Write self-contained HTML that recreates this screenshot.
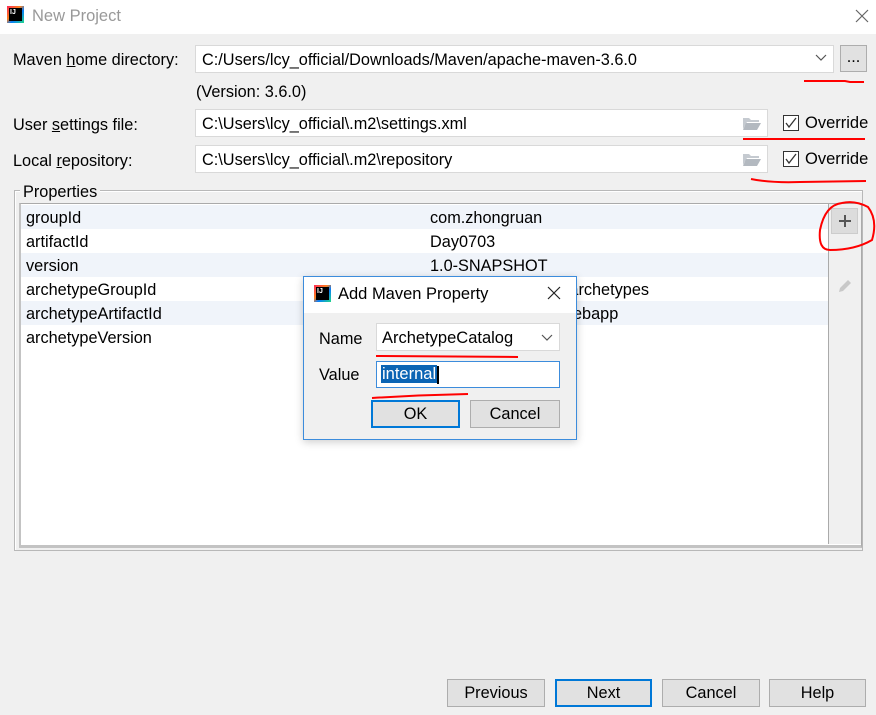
<!DOCTYPE html>
<html><head><meta charset="utf-8"><style>
*{box-sizing:border-box;margin:0;padding:0}
body{width:876px;height:715px;background:#f0f0f0;font-family:"Liberation Sans","Noto Sans CJK SC",sans-serif;font-size:16.3px;color:#000;position:relative;overflow:hidden}
.a{position:absolute}
.field{position:absolute;background:#fff;border:1px solid #d9d9d9;padding-left:6px;line-height:28px;white-space:nowrap;overflow:hidden}
.btn{position:absolute;background:#e1e1e1;border:1px solid #adadad;text-align:center;line-height:27px}
.row{position:absolute;left:21px;width:807px;height:24px;line-height:26px}
.row span{position:absolute;left:5px}
.row b{font-weight:normal;position:absolute;left:409px}
.cb{position:absolute;width:16px;height:16px;border:1px solid #333;background:#fff}
.logo{position:absolute;width:17px;height:17px;background:linear-gradient(135deg,#fe2857,#fc801d 40%,#087cfa 60%,#21d789);}
.logo i{position:absolute;left:2px;top:2px;width:13px;height:13px;background:#000;color:#fff;font-size:7px;font-style:normal;line-height:9px;padding-left:1px;font-weight:bold}
</style></head><body>
<div class="a" style="left:0;top:0;width:876px;height:34px;background:#fff"></div>
<div class="logo" style="left:7px;top:6px"><i>IJ</i></div>
<div class="a" style="left:32px;top:7px;color:#999;font-size:16.5px">New Project</div>
<svg class="a" style="left:854px;top:8px" width="16" height="16"><path d="M2 2L14 14M14 2L2 14" stroke="#666" stroke-width="1.2"/></svg>

<div class="a" style="left:13px;top:51px">Maven <u>h</u>ome directory:</div>
<div class="field" style="left:195px;top:45px;width:639px;height:28px">C:/Users/lcy_official/Downloads/Maven/apache-maven-3.6.0</div>
<svg class="a" style="left:815px;top:53px" width="12" height="10"><path d="M1 2L6 7L11 2" stroke="#555" fill="none" stroke-width="1.2"/></svg>
<div class="btn" style="left:840px;top:45px;width:27px;height:27px;line-height:22px">...</div>
<div class="a" style="left:196px;top:83px">(Version: 3.6.0)</div>

<div class="a" style="left:13px;top:116px">User <u>s</u>ettings file:</div>
<div class="field" style="left:195px;top:109px;width:573px;height:28px">C:\Users\lcy_official\.m2\settings.xml</div>
<div class="a" style="left:13px;top:152px">Local <u>r</u>epository:</div>
<div class="field" style="left:195px;top:145px;width:573px;height:28px">C:\Users\lcy_official\.m2\repository</div>
<svg class="a" style="left:742px;top:116px" width="20" height="14"><path d="M1 2h6l2 2h8v2H5L1 13z" fill="#c5cad0"/><path d="M4 7h15l-4 7H1z" fill="#b3b9c0"/></svg>
<svg class="a" style="left:742px;top:152px" width="20" height="14"><path d="M1 2h6l2 2h8v2H5L1 13z" fill="#c5cad0"/><path d="M4 7h15l-4 7H1z" fill="#b3b9c0"/></svg>
<div class="cb" style="left:783px;top:115px"></div>
<svg class="a" style="left:784px;top:116px" width="14" height="14"><path d="M2 7l3 4l7-9" stroke="#333" fill="none" stroke-width="1.3"/></svg>
<div class="a" style="left:805px;top:114px;font-size:16.5px">Override</div>
<div class="cb" style="left:783px;top:151px"></div>
<svg class="a" style="left:784px;top:152px" width="14" height="14"><path d="M2 7l3 4l7-9" stroke="#333" fill="none" stroke-width="1.3"/></svg>
<div class="a" style="left:805px;top:150px;font-size:16.5px">Override</div>

<div class="a" style="left:14px;top:190px;width:849px;height:361px;border:1px solid #b8b8b8;box-shadow:inset 1px 1px #fff"></div>
<div class="a" style="left:20px;top:183px;background:#f0f0f0;padding:0 3px">Properties</div>
<div class="a" style="left:19px;top:203px;width:843px;height:345px;border:1px solid #aaa;border-bottom:3px solid #c3c3c3;border-left:2px solid #c3c3c3;background:#fff"></div>
<div class="a" style="left:828px;top:204px;width:33px;height:340px;background:#f0f0f0;border-left:1px solid #aaa"></div>
<div class="a" style="left:831px;top:208px;width:27px;height:26px;background:#dcdcdc;border:1px solid #ccc"></div>
<svg class="a" style="left:837px;top:213px" width="16" height="16"><path d="M8 2v12M2 8h12" stroke="#555" stroke-width="2"/></svg>
<svg class="a" style="left:836px;top:277px" width="18" height="18"><path d="M3 15l1-4l8-8l3 3l-8 8z" fill="#c8c8c8"/></svg>

<div class="row" style="top:205px;background:#f0f4fa"><span>groupId</span><b>com.zhongruan</b></div>
<div class="row" style="top:229px"><span>artifactId</span><b>Day0703</b></div>
<div class="row" style="top:253px;background:#f0f4fa"><span>version</span><b>1.0-SNAPSHOT</b></div>
<div class="row" style="top:277px"><span>archetypeGroupId</span><b>org.apache.maven.archetypes</b></div>
<div class="row" style="top:301px;background:#f0f4fa"><span>archetypeArtifactId</span><b>maven-archetype-webapp</b></div>
<div class="row" style="top:325px"><span>archetypeVersion</span><b>1.4</b></div>

<!-- dialog -->
<div class="a" style="left:303px;top:276px;width:274px;height:164px;background:#f0f0f0;border:1px solid #3c8cdc;box-shadow:0 2px 8px rgba(0,0,0,.2)"></div>
<div class="a" style="left:304px;top:277px;width:272px;height:36px;background:#fff"></div>
<div class="logo" style="left:314px;top:285px"><i>IJ</i></div>
<div class="a" style="left:338px;top:285px;font-size:16.5px">Add Maven Property</div>
<svg class="a" style="left:547px;top:286px" width="14" height="14"><path d="M1 1L13 13M13 1L1 13" stroke="#222" stroke-width="1.2"/></svg>
<div class="a" style="left:319px;top:330px">Name</div>
<div class="field" style="left:376px;top:323px;width:184px;height:28px;padding-left:5px;font-size:16.5px">ArchetypeCatalog</div>
<svg class="a" style="left:541px;top:333px" width="12" height="10"><path d="M1 2L6 7L11 2" stroke="#555" fill="none" stroke-width="1.2"/></svg>
<div class="a" style="left:319px;top:366px">Value</div>
<div class="field" style="left:376px;top:361px;width:184px;height:27px;border-color:#3c8cdc;padding-left:4px;line-height:24px;font-size:16.5px"><span style="background:#0a64b4;color:#fff;padding:0 1px">internal</span><span style="display:inline-block;width:2px;height:18px;background:#000;vertical-align:middle"></span></div>
<div class="btn" style="left:371px;top:400px;width:89px;height:28px;border:2px solid #0078d7;line-height:25px">OK</div>
<div class="btn" style="left:470px;top:400px;width:90px;height:28px">Cancel</div>

<div class="btn" style="left:447px;top:679px;width:98px;height:28px">Previous</div>
<div class="btn" style="left:555px;top:679px;width:97px;height:28px;border:2px solid #0078d7;line-height:25px">Next</div>
<div class="btn" style="left:662px;top:679px;width:98px;height:28px">Cancel</div>
<div class="btn" style="left:769px;top:679px;width:97px;height:28px">Help</div>

<svg class="a" style="left:0;top:0" width="876" height="715" fill="none" stroke="#f00" stroke-width="2">
<path d="M804 81L845 81L850 82L864 82"/>
<path d="M743 139L865 139"/>
<path d="M751 179Q770 183 800 182L866 181"/>
<path d="M842 203Q825 205 820 230Q818 250 830 250Q855 250 872 240Q878 220 868 207Q855 200 842 203"/>
<path d="M376 356L518 357"/>
<path d="M372 398Q420 395 468 394"/>
</svg>
</body></html>
